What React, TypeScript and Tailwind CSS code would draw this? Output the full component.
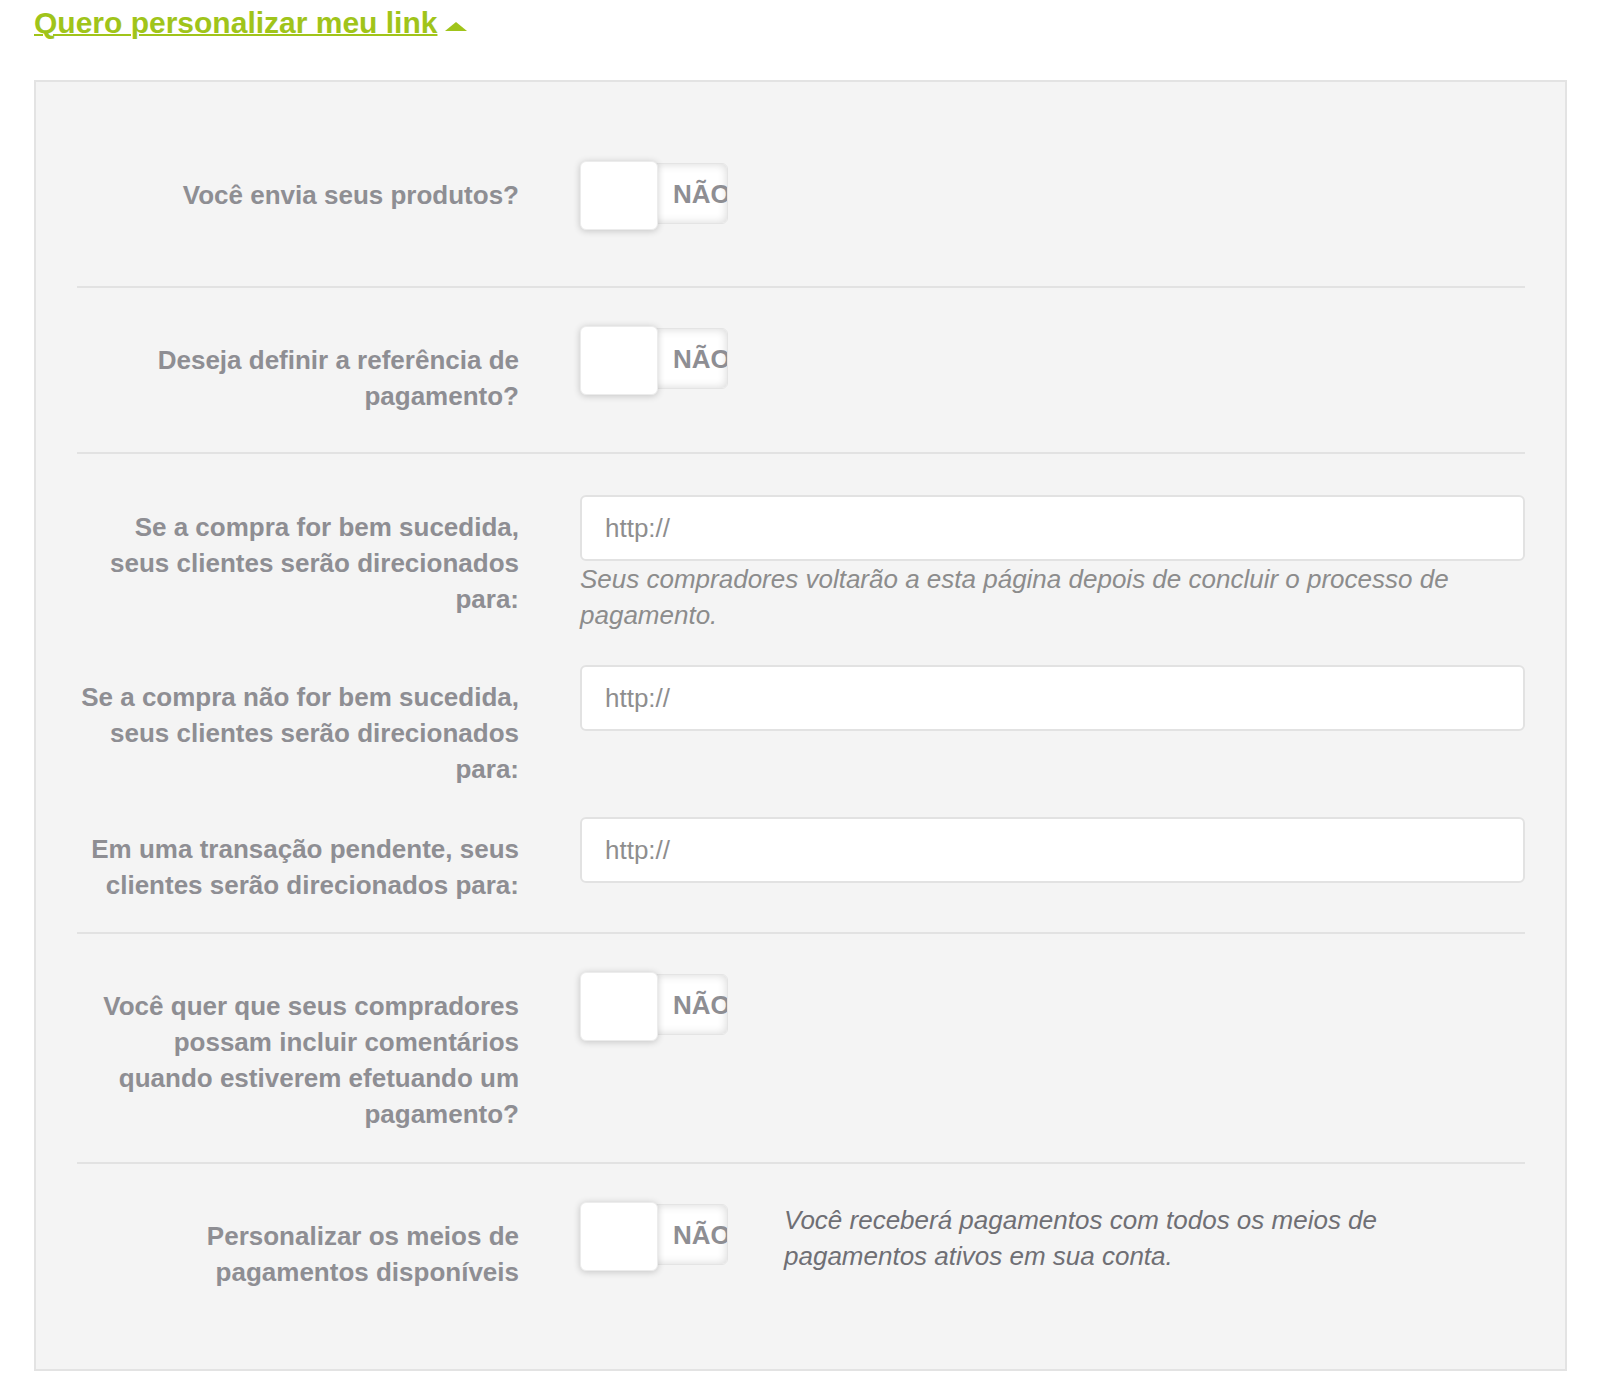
import React from "react";

const labelCls =
  "w-[442px] shrink-0 text-right text-[26px] font-bold leading-[36px] text-[#8e8e93] whitespace-nowrap";

function Toggle() {
  return (
    <div className="relative h-[69px] w-[148px] shrink-0">
      <div className="absolute left-0 top-[2px] flex h-[61px] w-[148px] items-center overflow-hidden rounded-md border border-[#e4e4e4] bg-white shadow-[inset_0_0_10px_rgba(0,0,0,0.16)]">
        <span className="ml-[92px] text-[26px] font-bold leading-none text-[#8e8e93]">NÃO</span>
      </div>
      <div className="absolute left-0 top-0 h-[69px] w-[78px] rounded-md border border-[#ececec] bg-white shadow-[0_1px_7px_rgba(0,0,0,0.2)]" />
    </div>
  );
}

function UrlInput() {
  return (
    <input
      type="text"
      placeholder="http://"
      className="h-[66px] w-full rounded-md border-2 border-[#e2e2e2] bg-white px-[23px] text-[26px] text-[#555] outline-none placeholder:text-[#8e8e8e]"
    />
  );
}

function Label({ lines, pt }: { lines: string[]; pt: string }) {
  return (
    <div className={`${labelCls} ${pt}`}>
      {lines.map((l, i) => (
        <div key={i}>{l}</div>
      ))}
    </div>
  );
}

export default function App() {
  return (
    <div className="min-h-[1394px] bg-white pt-[5px] font-['Liberation_Sans',Arial,sans-serif]">
      <div className="ml-[34px] flex items-center">
        <a
          href="#"
          className="text-[30px] font-bold leading-[36px] text-[#a0c41a] underline decoration-2"
        >
          Quero personalizar meu link
        </a>
        <span className="ml-2 mt-[6px] inline-block h-0 w-0 border-x-[11px] border-b-[9px] border-x-transparent border-b-[#a0c41a]" />
      </div>

      <div className="ml-[34px] mt-[39px] w-[1533px] border-2 border-[#e3e3e3] bg-[#f4f4f4]">
        {/* envio */}
        <div className="ml-[41px] mr-[40px] flex border-b-2 border-[#e2e2e2] pt-[79px] pb-[56px]">
          <Label pt="pt-[16px]" lines={["Você envia seus produtos?"]} />
          <div className="ml-[61px]">
            <Toggle />
          </div>
        </div>

        {/* referência */}
        <div className="ml-[41px] mr-[40px] flex border-b-2 border-[#e2e2e2] pt-[38px] pb-[38px]">
          <Label pt="pt-[16px]" lines={["Deseja definir a referência de", "pagamento?"]} />
          <div className="ml-[61px]">
            <Toggle />
          </div>
        </div>

        {/* urls */}
        <div className="ml-[41px] mr-[40px] border-b-2 border-[#e2e2e2] pt-[41px] pb-[29px]">
          <div className="flex">
            <Label
              pt="pt-[14px]"
              lines={["Se a compra for bem sucedida,", "seus clientes serão direcionados", "para:"]}
            />
            <div className="ml-[61px] flex-1">
              <UrlInput />
              <p className="text-[26px] italic leading-[36px] text-[#8c8c8c]">
                Seus compradores voltarão a esta página depois de concluir o processo de pagamento.
              </p>
            </div>
          </div>
          <div className="mt-[32px] flex">
            <Label
              pt="pt-[14px]"
              lines={["Se a compra não for bem sucedida,", "seus clientes serão direcionados", "para:"]}
            />
            <div className="ml-[61px] flex-1">
              <UrlInput />
            </div>
          </div>
          <div className="mt-[30px] flex">
            <Label
              pt="pt-[14px]"
              lines={["Em uma transação pendente, seus", "clientes serão direcionados para:"]}
            />
            <div className="ml-[61px] flex-1">
              <UrlInput />
            </div>
          </div>
        </div>

        {/* comentários */}
        <div className="ml-[41px] mr-[40px] flex border-b-2 border-[#e2e2e2] pt-[38px] pb-[30px]">
          <Label
            pt="pt-[16px]"
            lines={[
              "Você quer que seus compradores",
              "possam incluir comentários",
              "quando estiverem efetuando um",
              "pagamento?",
            ]}
          />
          <div className="ml-[61px]">
            <Toggle />
          </div>
        </div>

        {/* meios de pagamento */}
        <div className="ml-[41px] mr-[40px] flex pt-[38px] pb-[79px]">
          <Label pt="pt-[16px]" lines={["Personalizar os meios de", "pagamentos disponíveis"]} />
          <div className="ml-[61px] flex items-start">
            <Toggle />
            <p className="ml-[56px] whitespace-nowrap text-[26px] italic leading-[36px] text-[#6f6f74]">
              Você receberá pagamentos com todos os meios de
              <br />
              pagamentos ativos em sua conta.
            </p>
          </div>
        </div>
      </div>
    </div>
  );
}
